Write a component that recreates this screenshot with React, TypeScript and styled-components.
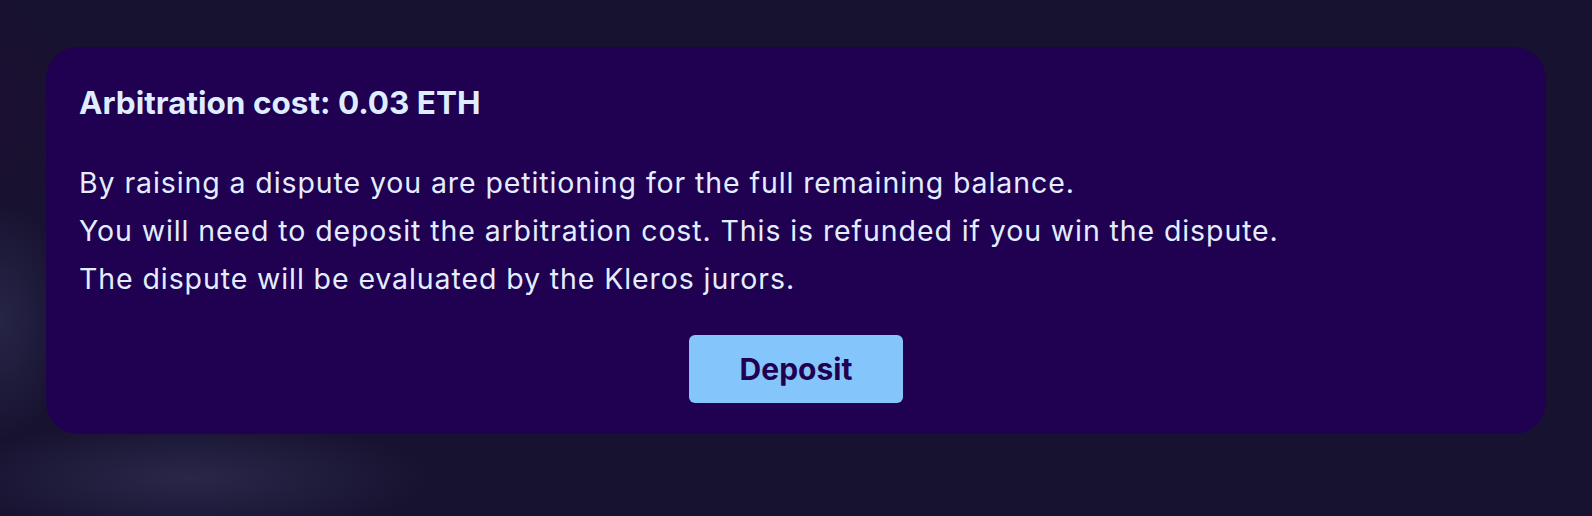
import styled, { createGlobalStyle } from "styled-components";

const GlobalStyle = createGlobalStyle`
  html, body {
    margin: 0;
    padding: 0;
    background-color: #17122f;
  }

  body {
    font-family: Inter, "Noto Sans", sans-serif;
    -webkit-font-smoothing: antialiased;
  }
`;

const Page = styled.div`
  min-height: 516px;
  box-sizing: border-box;
  padding: 47px 46px;
  background-color: #17122f;
  background-image:
    radial-gradient(ellipse 240px 60px at 190px 478px, rgba(46, 44, 80, 0.8), rgba(46, 44, 80, 0) 100%),
    radial-gradient(ellipse 70px 120px at 0px 320px, rgba(46, 46, 82, 0.7), rgba(46, 46, 82, 0) 100%),
    radial-gradient(ellipse 70px 110px at 0px 110px, rgba(30, 14, 50, 0.8), rgba(30, 14, 50, 0) 100%);
`;

const Card = styled.section`
  display: flex;
  flex-direction: column;
  gap: 32px;
  padding: 32px 33px 31px;
  background-color: #200050;
  border-radius: 32px;
  color: #e2eeff;
`;

const Title = styled.h2`
  margin: 0;
  font-size: 31.5px;
  line-height: 48px;
  font-weight: 700;
  color: #deedff;
`;

const Body = styled.div`
  font-size: 28.5px;
  line-height: 48px;
  letter-spacing: 0.9px;
  font-weight: 400;
`;

const Line = styled.p`
  margin: 0;
`;

const DepositButton = styled.button`
  align-self: center;
  width: 214px;
  height: 68px;
  border: none;
  border-radius: 6px;
  background-color: #84c5fb;
  color: #220050;
  font-family: Inter, "Noto Sans", sans-serif;
  font-size: 30px;
  font-weight: 700;
  cursor: pointer;
`;

export default function App() {
  return (
    <>
      <GlobalStyle />
      <Page>
        <Card>
          <Title>Arbitration cost: 0.03 ETH</Title>
          <Body>
            <Line>By raising a dispute you are petitioning for the full remaining balance.</Line>
            <Line>You will need to deposit the arbitration cost. This is refunded if you win the dispute.</Line>
            <Line>The dispute will be evaluated by the Kleros jurors.</Line>
          </Body>
          <DepositButton>Deposit</DepositButton>
        </Card>
      </Page>
    </>
  );
}
